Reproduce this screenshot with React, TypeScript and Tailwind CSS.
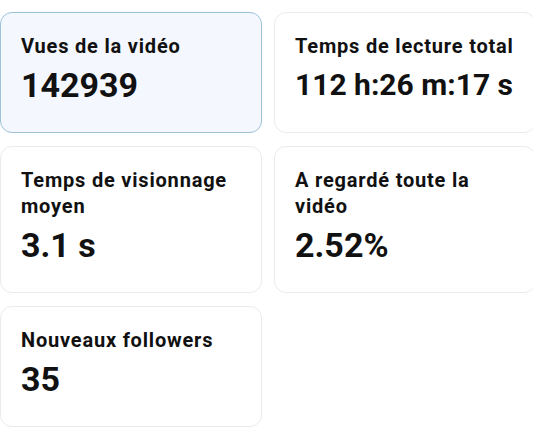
const stats = [
  { label: "Vues de la vidéo", value: "142939", active: true },
  { label: "Temps de lecture total", value: "112 h:26 m:17 s", small: true },
  { label: "Temps de visionnage moyen", value: "3.1 s" },
  { label: "A regardé toute la vidéo", value: "2.52%" },
  { label: "Nouveaux followers", value: "35" },
];

// ── Card ──────────────────────────────────────────────────────────────────────

const StatCard = ({
  label,
  value,
  active,
  small,
}: {
  label: string;
  value: string;
  active?: boolean;
  small?: boolean;
}) => (
  <div
    className={
      active
        ? "rounded-xl border border-[#9dc2d8] bg-[#f4f7fd] px-5 pt-5 pb-[27px]"
        : "rounded-xl border border-[#ebebeb] bg-white px-5 pt-5 pb-[27px]"
    }
  >
    <div className="text-[20px] leading-[26px] font-bold tracking-[0.8px] text-[#111111]">
      {label}
    </div>
    <div
      className={
        small
          ? "mt-1.5 text-[30px] leading-[40px] font-bold whitespace-nowrap text-[#111111]"
          : "mt-1.5 text-[34px] leading-[40px] font-bold whitespace-nowrap text-[#111111]"
      }
    >
      {value}
    </div>
  </div>
);

export default function App() {
  return (
    <div className="w-full h-[436px] overflow-hidden bg-white font-['Roboto',sans-serif]">
      <div className="grid w-[536px] grid-cols-[262px_262px] items-start gap-x-3 gap-y-[13px] pt-3">
        {stats.map((s) => (
          <StatCard key={s.label} {...s} />
        ))}
      </div>
    </div>
  );
}
